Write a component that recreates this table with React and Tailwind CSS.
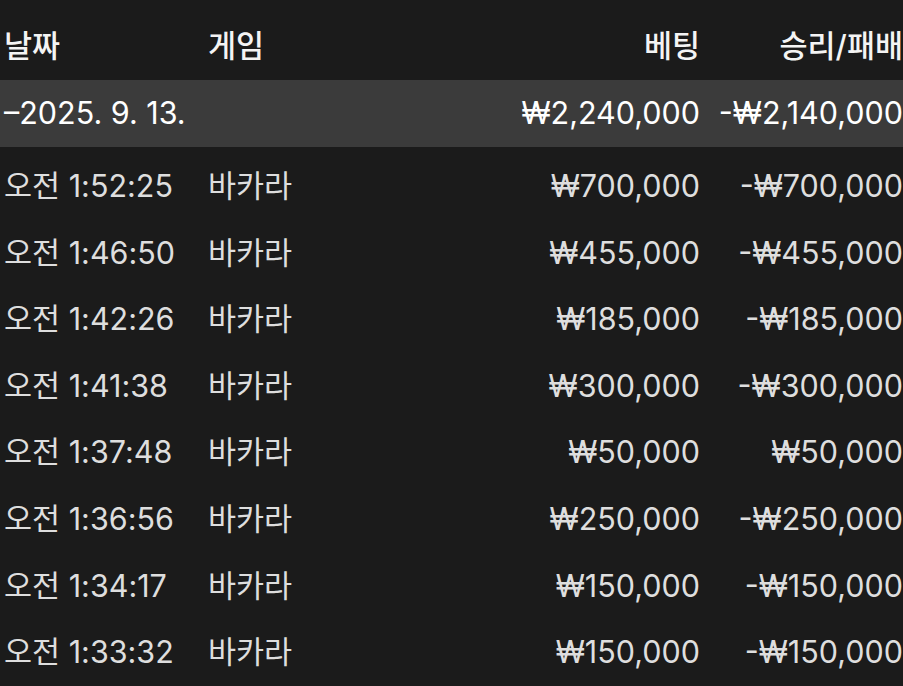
const rows = [
  { time: "오전 1:52:25", game: "바카라", bet: "₩700,000", result: "-₩700,000" },
  { time: "오전 1:46:50", game: "바카라", bet: "₩455,000", result: "-₩455,000" },
  { time: "오전 1:42:26", game: "바카라", bet: "₩185,000", result: "-₩185,000" },
  { time: "오전 1:41:38", game: "바카라", bet: "₩300,000", result: "-₩300,000" },
  { time: "오전 1:37:48", game: "바카라", bet: "₩50,000", result: "₩50,000" },
  { time: "오전 1:36:56", game: "바카라", bet: "₩250,000", result: "-₩250,000" },
  { time: "오전 1:34:17", game: "바카라", bet: "₩150,000", result: "-₩150,000" },
  { time: "오전 1:33:32", game: "바카라", bet: "₩150,000", result: "-₩150,000" },
];

const cols = "grid grid-cols-[208px_1fr_1fr_203px] items-center";

export default function App() {
  return (
    <div
      className="w-[903px] h-[686px] overflow-hidden bg-[#1b1b1b] text-[30.5px] leading-none"
      style={{ fontFamily: 'Inter, "Noto Sans CJK KR", sans-serif' }}
    >
      <div className={`${cols} h-20 pt-3 text-[#f4f4f4] font-medium`}>
        <div className="pl-1">날짜</div>
        <div>게임</div>
        <div className="text-right">베팅</div>
        <div className="text-right whitespace-nowrap">승리/패배</div>
      </div>

      <div className={`${cols} h-[67px] bg-[#3b3b3b] text-white`}>
        <div className="pl-1 col-span-2 whitespace-nowrap">–2025. 9. 13.</div>
        <div className="text-right">₩2,240,000</div>
        <div className="text-right whitespace-nowrap">-₩2,140,000</div>
      </div>

      <div className="pt-[6px]">
        {rows.map((r, i) => (
          <div key={i} className={`${cols} h-[66.6px] text-[#dedede]`}>
            <div className="pl-1 whitespace-nowrap">{r.time}</div>
            <div>{r.game}</div>
            <div className="text-right">{r.bet}</div>
            <div className="text-right whitespace-nowrap">{r.result}</div>
          </div>
        ))}
      </div>
    </div>
  );
}
